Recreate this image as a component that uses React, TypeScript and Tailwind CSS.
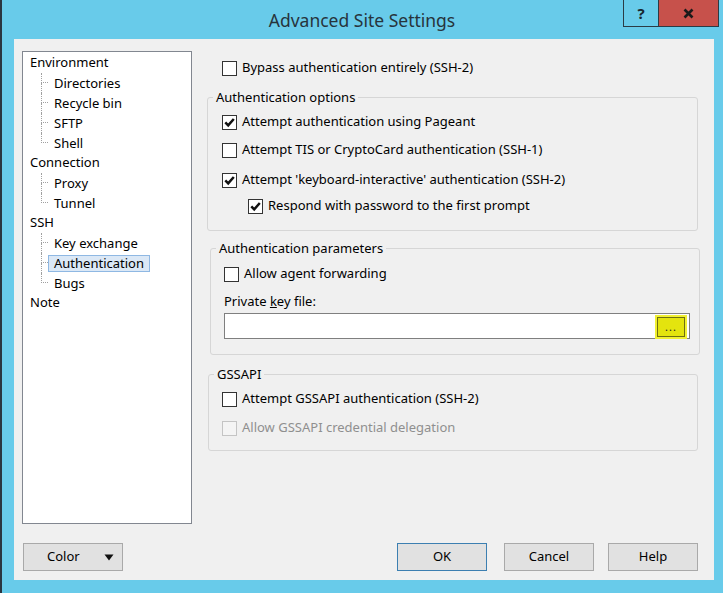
import React from "react"

const tree = [
  { label: "Environment", children: ["Directories", "Recycle bin", "SFTP", "Shell"] },
  { label: "Connection", children: ["Proxy", "Tunnel"] },
  { label: "SSH", children: ["Key exchange", "Authentication", "Bugs"] },
  { label: "Note", children: [] as string[] },
]

function Check({ checked = false, disabled = false }: { checked?: boolean; disabled?: boolean }) {
  return (
    <span
      className={`w-[15px] h-[15px] shrink-0 flex items-center justify-center border ${
        disabled ? "border-[#c4c4c4] bg-[#f4f4f4]" : "border-[#333] bg-white"
      }`}
    >
      {checked && (
        <svg width="13" height="13" viewBox="0 0 13 13">
          <path d="M2.3 6.4 L5.2 9.4 L10.8 3" fill="none" stroke="#111" strokeWidth="2.5" />
        </svg>
      )}
    </span>
  )
}

function CheckRow({
  label,
  checked,
  disabled,
  className = "",
}: {
  label: string
  checked?: boolean
  disabled?: boolean
  className?: string
}) {
  return (
    <div className={`flex items-center h-[20px] gap-[5px] ${className}`}>
      <Check checked={checked} disabled={disabled} />
      <span className={disabled ? "text-[#8f8f8f]" : "text-black"}>{label}</span>
    </div>
  )
}

function Tree() {
  return (
    <div className="w-[170px] h-[473px] border border-[#828790] bg-white pt-[1px] pl-[7px]">
      {tree.map((node) => (
        <div key={node.label}>
          <div className="h-[20px] flex items-center">{node.label}</div>
          {node.children.length > 0 && (
            <div className="ml-[11px]">
              {node.children.map((child, i) => {
                const last = i === node.children.length - 1
                const selected = child === "Authentication"
                return (
                  <div key={child} className="h-[20px] flex items-center">
                    <div className="w-[7px] h-full flex flex-col shrink-0">
                      <div className="h-1/2 border-l border-b border-dotted border-[#a0a0a0]" />
                      <div className={`h-1/2 ${last ? "" : "border-l border-dotted border-[#a0a0a0]"}`} />
                    </div>
                    <span
                      className={`h-[17px] leading-[15px] px-[5px] border ${
                        selected ? "bg-[#dbe8f6] border-[#8fb8e3]" : "border-transparent"
                      }`}
                    >
                      {child}
                    </span>
                  </div>
                )
              })}
            </div>
          )}
        </div>
      ))}
    </div>
  )
}

function Button({ children, primary = false }: { children: React.ReactNode; primary?: boolean }) {
  return (
    <button
      className={`w-[90px] h-[28px] border bg-[#e1e1e1] flex items-center justify-center ${
        primary ? "border-[#3c7fb1]" : "border-[#a9a9a9]"
      }`}
    >
      {children}
    </button>
  )
}

export default function App() {
  return (
    <div className="w-[723px] h-[593px] bg-[#68cbea] border-l-2 border-[#2a3640] flex flex-col font-['Noto_Sans','Segoe_UI',sans-serif] text-[13px] text-black overflow-hidden">
      <div className="h-[39px] flex shrink-0">
        <div className="w-[99px]" />
        <div className="flex-1 flex items-center justify-center text-[17.5px] text-[#27343c] pt-[1px]">
          Advanced Site Settings
        </div>
        <div className="w-[96px] mr-[4px] h-[27px] flex border-l border-b border-r border-[#2b3b45]">
          <div className="w-[35px] border-r border-[#2b3b45] flex items-center justify-center text-[15px] font-bold text-[#18262f]">
            ?
          </div>
          <div className="flex-1 bg-[#c7514b] flex items-center justify-center">
            <svg width="11" height="11" viewBox="0 0 11 11">
              <path d="M1.5 1.5 L9.5 9.5 M9.5 1.5 L1.5 9.5" stroke="#1a1a1a" strokeWidth="2.6" />
            </svg>
          </div>
        </div>
      </div>

      <div className="ml-[12px] mr-[9px] h-[541px] bg-[#f0f0f0] pt-[12px] pl-[8px] pr-[16px] flex flex-col">
        <div className="flex">
          <Tree />
          <div className="flex-1 ml-[15px] flex flex-col">
            <CheckRow label="Bypass authentication entirely (SSH-2)" className="mt-[7px] ml-[15px]" />

            <fieldset className="mt-[9px] border border-[#d6d6d6] rounded-[3px] pl-[14px] pb-[14px]">
              <legend className="-ml-[9px] px-[3px] leading-[20px]">Authentication options</legend>
              <CheckRow label="Attempt authentication using Pageant" checked className="mt-[5px]" />
              <CheckRow label="Attempt TIS or CryptoCard authentication (SSH-1)" className="mt-[8px]" />
              <CheckRow
                label="Attempt 'keyboard-interactive' authentication (SSH-2)"
                checked
                className="mt-[10px]"
              />
              <CheckRow
                label="Respond with password to the first prompt"
                checked
                className="mt-[6px] ml-[26px]"
              />
            </fieldset>

            <fieldset className="mt-[7px] ml-[3px] -mr-[2px] border border-[#d6d6d6] rounded-[3px] pl-[13px] pr-[9px] pb-[15px]">
              <legend className="-ml-[8px] px-[3px] leading-[20px]">Authentication parameters</legend>
              <CheckRow label="Allow agent forwarding" className="mt-[6px]" />
              <div className="mt-[8px] h-[20px] flex items-center">
                Private&nbsp;<span className="underline">k</span>ey file:
              </div>
              <div className="mt-[1px] h-[26px] border border-[#7f7f7f] bg-white flex items-start justify-end pt-[3px] pr-[4px]">
                <div className="w-[28px] h-[20px] bg-[#e4e40e] border border-[#6f6f10] shadow-[0_0_0_2px_#f0f032] flex items-end justify-center pb-[4px]">
                  <span className="leading-none text-[11px] tracking-[1px] text-[#222]">...</span>
                </div>
              </div>
            </fieldset>

            <fieldset className="mt-[9px] ml-[1px] border border-[#d6d6d6] rounded-[3px] pl-[13px] pb-[12px]">
              <legend className="-ml-[8px] px-[3px] leading-[20px]">GSSAPI</legend>
              <CheckRow label="Attempt GSSAPI authentication (SSH-2)" className="mt-[5px]" />
              <CheckRow label="Allow GSSAPI credential delegation" disabled className="mt-[9px]" />
            </fieldset>
          </div>
        </div>

        <div className="mt-[19px] flex items-center">
          <button className="ml-[1px] w-[100px] h-[28px] border border-[#a9a9a9] bg-[#e1e1e1] flex items-center pl-[23px] pr-[8px]">
            <span>Color</span>
            <svg className="ml-auto" width="10" height="7" viewBox="0 0 10 7">
              <path d="M0.5 0.5 H9.5 L5 6.5 Z" fill="#111" />
            </svg>
          </button>
          <div className="flex-1" />
          <Button primary>OK</Button>
          <div className="ml-[17px]">
            <Button>Cancel</Button>
          </div>
          <div className="ml-[14px]">
            <Button>Help</Button>
          </div>
        </div>
      </div>
    </div>
  )
}
